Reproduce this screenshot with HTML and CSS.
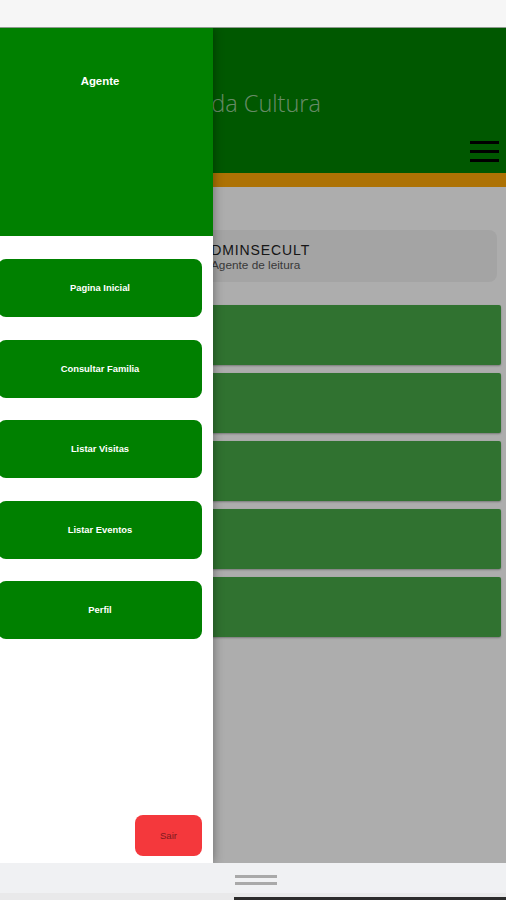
FILE: index.html
```html
<!DOCTYPE html>
<html lang="pt">
<head>
  <meta charset="UTF-8">
  <title>Agente de leitura</title>
  <link rel="stylesheet" href="styles.css">
</head>
<body>
  <div class="topbar"></div>

  <div class="app">
    <header class="header">
      <h1 class="title">Secretaria da Cultura</h1>
      <button class="menu-btn" aria-label="Menu">
        <span></span>
        <span></span>
        <span></span>
      </button>
    </header>
    <div class="stripe"></div>

    <main class="content">
      <div class="user-card">
        <div class="user-name">ADMINSECULT</div>
        <div class="user-role">Agente de leitura</div>
      </div>
      <div class="tiles">
        <div class="tile"></div>
        <div class="tile"></div>
        <div class="tile"></div>
        <div class="tile"></div>
        <div class="tile"></div>
      </div>
    </main>

    <div class="scrim"></div>

    <aside class="drawer">
      <div class="drawer-head">Agente</div>
      <nav class="drawer-nav">
        <a href="#">Pagina Inicial</a>
        <a href="#">Consultar Familia</a>
        <a href="#">Listar Visitas</a>
        <a href="#">Listar Eventos</a>
        <a href="#">Perfil</a>
      </nav>
      <div class="drawer-foot">
        <button class="logout">Sair</button>
      </div>
    </aside>
  </div>

  <div class="bottombar">
    <div class="handle">
      <span></span>
      <span></span>
    </div>
  </div>
  <div class="edge"><div class="edge-dark"></div></div>
</body>
</html>
```

FILE: styles.css
```css
* {
  box-sizing: border-box;
}

html, body {
  height: 100%;
}

body {
  margin: 0;
  display: flex;
  flex-direction: column;
  height: 900px;
  overflow: hidden;
  font-family: "Liberation Sans", Arial, sans-serif;
  background-color: #ffffff;
  color: #222;
}

.topbar {
  flex: none;
  height: 28px;
  background-color: #f6f6f6;
  border-bottom: 1px solid #8f9a8f;
}

.app {
  position: relative;
  flex: 1;
  display: flex;
  flex-direction: column;
  overflow: hidden;
}

/* page under the drawer */
.header {
  height: 145px;
  flex: none;
  padding: 60px 7px 0 99px;
  background-color: #008200;
  display: flex;
  flex-direction: column;
}

.title {
  margin: 0;
  font-family: "Open Sans", sans-serif;
  font-weight: 300;
  font-size: 23.5px;
  line-height: 30px;
  color: rgba(255, 255, 255, 0.62);
  white-space: nowrap;
}

.menu-btn {
  align-self: flex-end;
  margin-top: 23px;
  width: 29px;
  padding: 0;
  border: none;
  background: none;
  display: flex;
  flex-direction: column;
  gap: 6.5px;
}

.menu-btn span {
  display: block;
  height: 2.5px;
  background-color: #000;
}

.stripe {
  height: 14px;
  flex: none;
  background-color: #ffa806;
}

.content {
  flex: 1;
  padding: 43px 5px 0 5px;
  background-color: #ffffff;
}

.user-card {
  margin-right: 4px;
  height: 52px;
  padding: 13px 0 0 196px;
  border-radius: 8px;
  background-color: #f2f2f2;
}

.user-name {
  font-size: 14px;
  line-height: 15px;
  letter-spacing: 0.9px;
  color: #222;
  white-space: nowrap;
}

.user-role {
  margin-left: 10px;
  font-size: 11.8px;
  line-height: 14px;
  color: #555;
}

.tiles {
  margin-top: 23px;
  display: flex;
  flex-direction: column;
  gap: 7.5px;
}

.tile {
  height: 60.4px;
  border-radius: 2px;
  background-color: #47a847;
  box-shadow: 0 1px 2px rgba(0, 0, 0, 0.3);
}

.scrim {
  position: absolute;
  inset: 0;
  background-color: rgba(0, 0, 0, 0.32);
}

/* drawer */
.drawer {
  position: absolute;
  top: 0;
  bottom: 0;
  left: 0;
  width: 213px;
  display: flex;
  flex-direction: column;
  background-color: #fff;
  box-shadow: 0 0 10px rgba(0, 0, 0, 0.4);
}

.drawer-head {
  height: 208px;
  flex: none;
  padding-top: 46px;
  padding-right: 13px;
  text-align: center;
  background-color: #008000;
  color: #fff;
  font-size: 11.4px;
  font-weight: bold;
  line-height: 14px;
}

.drawer-nav {
  margin: 23px 11px 0 -2px;
  display: flex;
  flex-direction: column;
  gap: 22.5px;
}

.drawer-nav a {
  height: 58px;
  padding-bottom: 1px;
  display: flex;
  align-items: center;
  justify-content: center;
  border-radius: 8px;
  background-color: #008000;
  color: #fff;
  font-size: 9.4px;
  font-weight: bold;
  text-decoration: none;
}

.drawer-foot {
  margin-top: auto;
  padding: 0 11px 7px 0;
  display: flex;
  justify-content: flex-end;
}

.logout {
  width: 67px;
  height: 41px;
  border: none;
  border-radius: 8px;
  background-color: #f4383c;
  color: #7d1a1e;
  font-family: "Liberation Sans", Arial, sans-serif;
  font-size: 9.6px;
}

.bottombar {
  height: 30px;
  flex: none;
  display: flex;
  justify-content: center;
  padding: 12px 0 0 6px;
  background-color: #f0f1f3;
}

.handle {
  width: 42px;
  display: flex;
  flex-direction: column;
  gap: 4px;
}

.handle span {
  display: block;
  height: 3px;
  background-color: #a9a9a9;
}

.edge {
  height: 7px;
  flex: none;
  background-color: #e9e9ea;
  display: flex;
  justify-content: flex-end;
  align-items: flex-end;
}

.edge-dark {
  width: 272px;
  height: 3px;
  background-color: #2c2c2c;
}
```
